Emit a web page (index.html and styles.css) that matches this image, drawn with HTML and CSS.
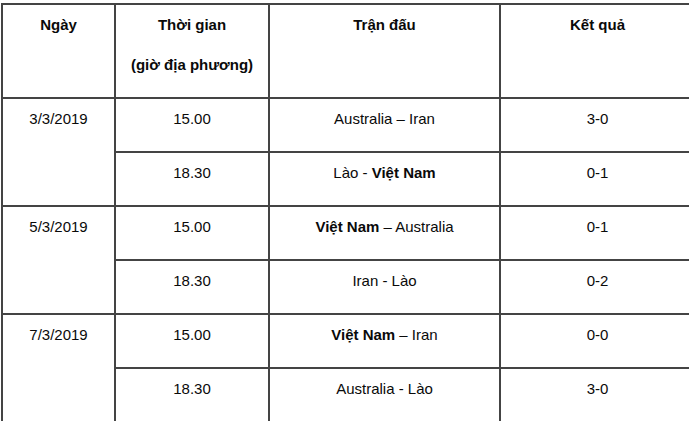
FILE: index.html
```html
<!DOCTYPE html>
<html lang="vi">
<head>
<meta charset="utf-8">
<title>Lịch thi đấu</title>
<link rel="stylesheet" href="styles.css">
</head>
<body>
<table class="schedule">
  <colgroup>
    <col class="c-date">
    <col class="c-time">
    <col class="c-match">
    <col class="c-score">
  </colgroup>
  <thead>
    <tr>
      <th><p>Ngày</p></th>
      <th><p>Thời gian</p><p>(giờ địa phương)</p></th>
      <th><p>Trận đấu</p></th>
      <th><p>Kết quả</p></th>
    </tr>
  </thead>
  <tbody>
    <tr>
      <td rowspan="2"><p>3/3/2019</p></td>
      <td><p>15.00</p></td>
      <td><p>Australia – Iran</p></td>
      <td><p>3-0</p></td>
    </tr>
    <tr>
      <td><p>18.30</p></td>
      <td><p>Lào - <b>Việt Nam</b></p></td>
      <td><p>0-1</p></td>
    </tr>
    <tr>
      <td rowspan="2"><p>5/3/2019</p></td>
      <td><p>15.00</p></td>
      <td><p><b>Việt Nam</b> – Australia</p></td>
      <td><p>0-1</p></td>
    </tr>
    <tr>
      <td><p>18.30</p></td>
      <td><p>Iran - Lào</p></td>
      <td><p>0-2</p></td>
    </tr>
    <tr>
      <td rowspan="2"><p>7/3/2019</p></td>
      <td><p>15.00</p></td>
      <td><p><b>Việt Nam</b> – Iran</p></td>
      <td><p>0-0</p></td>
    </tr>
    <tr>
      <td><p>18.30</p></td>
      <td><p>Australia - Lào</p></td>
      <td><p>3-0</p></td>
    </tr>
  </tbody>
</table>
</body>
</html>
```
FILE: styles.css
```css
html, body {
  margin: 0;
  padding: 0;
  background: #fff;
  overflow: hidden;
}

body {
  padding: 3px 0 0 1px;
  font-family: "Liberation Sans", Arial, sans-serif;
  font-size: 15px;
  color: #0a0a0a;
}

.schedule {
  border-collapse: collapse;
  table-layout: fixed;
  width: 693px;
}

.c-date { width: 113px; }
.c-time { width: 154px; }
.c-match { width: 231px; }
.c-score { width: 195px; }

.schedule th,
.schedule td {
  border: 2px solid #444;
  padding: 8px 6px 4px;
  text-align: center;
  vertical-align: top;
  font-weight: normal;
}

.schedule th {
  font-weight: bold;
}

.schedule p {
  margin: 0 0 16px;
  line-height: 24px;
}
```
